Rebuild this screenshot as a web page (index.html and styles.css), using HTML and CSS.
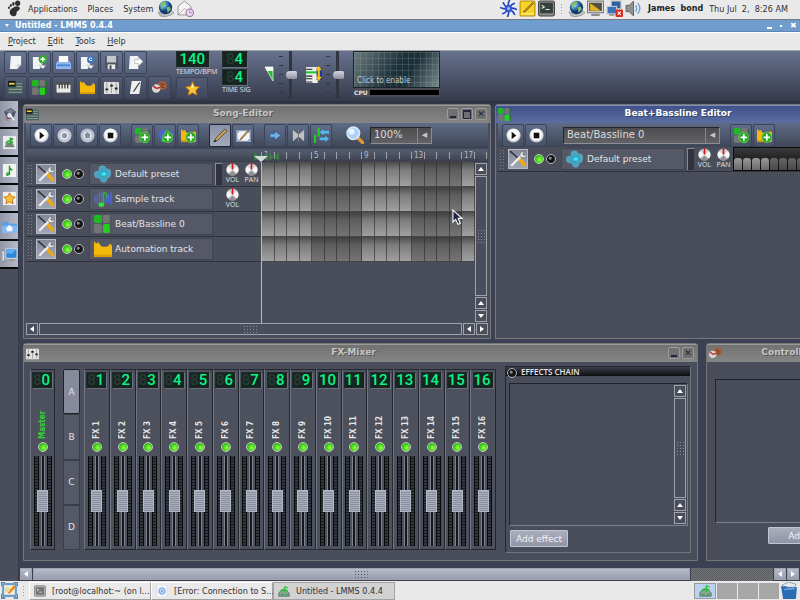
FILE: index.html
```
<!DOCTYPE html>
<html lang="en">
<head>
    <meta charset="UTF-8">
    <meta name="viewport" content="width=device-width, initial-scale=1.0">
    <title>Untitled - LMMS 0.4.4</title>
    <link rel="stylesheet" href="styles.css">
</head>
<body>

    <svg class="sprite" aria-hidden="true">
        <defs>
            <radialGradient id="g-blob"><stop offset="0" stop-color="#35d8f0"/><stop offset=".3" stop-color="#3aa3bd"/><stop offset="1" stop-color="#5aa5c4"/></radialGradient>
            <linearGradient id="g-disc" x2="0" y2="1"><stop offset="0" stop-color="#fff"/><stop offset="1" stop-color="#bfc3cc"/></linearGradient>
            <radialGradient id="g-globe" cx=".35" cy=".3"><stop offset="0" stop-color="#d5ebff"/><stop offset=".5" stop-color="#3f86cf"/><stop offset="1" stop-color="#153a70"/></radialGradient>
        </defs>
        <symbol id="foot" viewBox="0 0 16 16"><g fill="#303030"><path d="M7 7c3-2 6-1 6 1s-3 2-3 4-1 4-4 3-4-6 1-8z"/><ellipse cx="11" cy="3" rx="2.4" ry="2.6"/><ellipse cx="7" cy="3.6" rx="1.2" ry="1.8"/><ellipse cx="4.6" cy="5.2" rx="1" ry="1.4"/><ellipse cx="2.8" cy="7.2" rx=".9" ry="1.2"/></g></symbol>
        <symbol id="globe" viewBox="0 0 16 16"><path d="M1 11q6 5 13-1l2 2q-6 5-13 3z" fill="#c5c9c9" stroke="#666" stroke-width=".5"/><circle cx="8" cy="7" r="6.300" fill="url(#g-globe)"/><path d="M3 4q3-4 6-2l-2 3-2 1 1 3-2-1zM9 7l3-1 1 3-3 3z" fill="#7cc068"/></symbol>
        <symbol id="mail" viewBox="0 0 16 16"><path d="M1 6l6-5 6 5v8H1z" fill="#f5f5f2" stroke="#888" stroke-width=".8"/><path d="M1 14l6-6 6 6" fill="none" stroke="#999" stroke-width=".7"/><circle cx="12" cy="12" r="3.5" fill="#e9dcf0" stroke="#9a68a8"/><path d="M12 10v2h2" fill="none" stroke="#9a68a8" stroke-width=".7"/></symbol>
        <symbol id="burst" viewBox="0 0 16 16"><g stroke="#1d3fc0" stroke-width="1.5" fill="none"><path d="M8 8Q7 4 9 0M8 8Q10 4 14 3M8 8q4-1 8 1M8 8q4 2 6 6M8 8q1 4-1 8M8 8q-2 4-6 5M8 8q-4 1-8-1M8 8Q4 6 3 2"/></g><circle cx="8" cy="8" r="3.500" fill="#3557d0"/><circle cx="8" cy="8" r="1.500" fill="#9db5f5"/></symbol>
        <symbol id="note" viewBox="0 0 16 16"><rect x="1" y="1" width="14" height="14" rx="1" fill="#f5d425" stroke="#b88a12"/><path d="M2 13h12" stroke="#fff3a0"/><path d="M5 10l8-8 1 1-8 8-2 .5z" fill="#c98a2b" stroke="#5a421a" stroke-width=".5"/></symbol>
        <symbol id="term" viewBox="0 0 16 16"><rect x=".5" y="1" width="15" height="14" rx="1.5" fill="#8c8f88" stroke="#444"/><rect x="2" y="2.5" width="12" height="10" fill="#34403a"/><path d="M3.500 5l2.500 1.500L3.500 8M7 9h4" stroke="#e5e5e5" fill="none"/></symbol>
        <symbol id="term-task" viewBox="0 0 16 16"><rect x=".5" y="1" width="15" height="14" rx="1.5" fill="#b5b7b2" stroke="#777"/><rect x="2.500" y="3" width="11" height="10" fill="#6f7672"/><path d="M4 5l2.500 1.500L4 8M7 9.500h4" stroke="#e5e5e5" fill="none"/></symbol>
        <symbol id="monitor" viewBox="0 0 16 16"><rect x=".5" y="1" width="15" height="11" fill="#e4e2da" stroke="#777"/><rect x="2" y="2.500" width="12" height="8" fill="#555046"/><path d="M3 3l10 7H3z" fill="#e5b422"/><path d="M4 14h8" stroke="#888" stroke-width="2"/></symbol>
        <symbol id="net" viewBox="0 0 16 16"><rect x="5" y="1" width="9" height="7" fill="#2e5fa5" stroke="#bbb"/><rect x="1" y="6" width="9" height="7" fill="#3b72bd" stroke="#ccc"/><path d="M3 14h5" stroke="#888" stroke-width="1.500"/><rect x="9" y="9" width="7" height="7" rx="1" fill="#d92a20"/><path d="M11 11l3 3M14 11l-3 3" stroke="#fff"/></symbol>
        <symbol id="speaker" viewBox="0 0 16 16"><path d="M1 5h3l4-4v14l-4-4H1z" fill="#8f938f" stroke="#555" stroke-width=".8"/><path d="M10 5q2 3 0 6M12 3q4 5 0 10" stroke="#6b9ad2" fill="none" stroke-width="1.200"/></symbol>
        <symbol id="page" viewBox="0 0 16 16"><path d="M3 1h11v9l-4 5H2z" fill="#f2f3f4"/><path d="M14 10h-4v5z" fill="#c9cccf"/></symbol>
        <symbol id="page-add" viewBox="0 0 16 16"><path d="M1 2h10v9l-3 4H1z" fill="#f2f3f4"/><circle cx="11.500" cy="4.500" r="4.500" fill="#2fae28"/><path d="M11.500 2v5M9 4.500h5" stroke="#fff" stroke-width="1.500"/><path d="M8 11h7l-3.500 4z" fill="#fff" stroke="#6b7488" stroke-width=".5"/></symbol>
        <symbol id="tray" viewBox="0 0 16 16"><path d="M3 1h10v7H3z" fill="#fbfcff"/><path d="M0 9l2-3h1v2h10V6h1l2 3v6H0z" fill="#8bb9f0"/><path d="M1 11h14" stroke="#4d87d3" stroke-width="2"/></symbol>
        <symbol id="page-recent" viewBox="0 0 16 16"><path d="M1 2h10v9l-3 4H1z" fill="#f2f3f4"/><circle cx="11.500" cy="5" r="4" fill="#3d78bf"/><path d="M13 4q-2-2-3 0t3 2" stroke="#fff" fill="none"/><path d="M8 11h7l-3.500 4z" fill="#fff" stroke="#6b7488" stroke-width=".5"/></symbol>
        <symbol id="floppy" viewBox="0 0 16 16"><path d="M1 1h14v14H3l-2-2z" fill="#50535b"/><path d="M3 1h10v7H3z" fill="#c3c6cc"/><path d="M4 10h8v5H4z" fill="#e8e9ec"/><path d="M6 11h2v4H6z" fill="#444"/></symbol>
        <symbol id="page-out" viewBox="0 0 16 16"><path d="M2 1h9v14H1z" fill="#f2f3f4"/><path d="M7 5h4V2l5 5-5 5V9H7z" fill="#fff" stroke="#a9adb2" stroke-width=".7"/></symbol>
        <symbol id="song" viewBox="0 0 16 16"><rect x="0" y="2" width="16" height="13" rx="1" fill="#46605f"/><rect x="0" y="1" width="8" height="6" fill="#16181a"/><path d="M1 4h6" stroke="#ead13a" stroke-width="2"/><path d="M9 4h6M9 7h6M1 10h14M1 13h14" stroke="#8c9c93" stroke-width="1.200"/></symbol>
        <symbol id="bb" viewBox="0 0 16 16"><rect width="7" height="7" rx="1.500" fill="#22b822"/><rect x="8" width="6" height="7" rx="1.500" fill="#747674"/><rect y="8" width="7" height="8" rx="1.500" fill="#747674"/><rect x="8" y="8" width="6" height="8" rx="1.500" fill="#25cf1e"/><path d="M15.500 1v6M15.500 9v6" stroke="#2a6f31"/></symbol>
        <symbol id="keys" viewBox="0 0 16 16"><rect y="3" width="16" height="11" rx="1" fill="#e9e9e9" stroke="#333"/><path d="M0 4h16" stroke="#555" stroke-width="2"/><path d="M3.500 4v5M6.500 4v5M9.500 4v5M12.500 4v5" stroke="#222" stroke-width="1.200"/></symbol>
        <symbol id="auto" viewBox="0 0 16 16"><path d="M0 1l2 2 2-1 2 3 2 1h3l2-1 1-2 2 2v10H0z" fill="#f5b90c"/><path d="M0 14h16" stroke="#d99a08" stroke-width="2"/></symbol>
        <symbol id="mixer" viewBox="0 0 16 16"><rect y="2" width="16" height="13" rx="1" fill="#e0e2e2"/><path d="M3 3v11M8 3v11M13 3v11" stroke="#999"/><path d="M1.500 10h3M6.500 6h3M11.500 9h3" stroke="#222" stroke-width="2"/></symbol>
        <symbol id="notes" viewBox="0 0 16 16"><path d="M4 1h10l-2 14H2z" fill="#edf0ef"/><path d="M6 11l6-9 1 1-6 9-2 1z" fill="#444"/></symbol>
        <symbol id="ctrl" viewBox="0 0 16 16"><path d="M6 3q4-3 9-1l1 6q-4 4-8 1z" fill="#a55b34"/><path d="M9 4l4 1M8 7l5 1" stroke="#6a351d"/><circle cx="4.500" cy="9" r="4.500" fill="#d8d8d8"/><path d="M4.500 9L1 6M4.500 9l4-1" stroke="#c3261f" stroke-width="1.600"/></symbol>
        <symbol id="star" viewBox="0 0 16 16"><path d="M8 .8l2.200 4.900 5.200.6-3.900 3.600 1.100 5.300L8 12.500l-4.600 2.700 1.100-5.300L.6 6.300l5.200-.6z" fill="#fbc62c" stroke="#c07818" stroke-width=".8"/><path d="M8 3l1.200 4-3 1z" fill="#fff0a0"/></symbol>
        <symbol id="vol" viewBox="0 0 10 16"><path d="M1 1h8v14z" fill="#21c02b" stroke="#e8f5e8" stroke-width=".8"/><path d="M1 1h8v4H3z" fill="#f4fff4"/></symbol>
        <symbol id="pitch" viewBox="0 0 16 16"><rect y="1" width="11" height="15" fill="#eee"/><path d="M0 3h6M0 9.500h6M0 12h6M0 15h6" stroke="#222"/><path d="M0 6h11" stroke="#1fc62e" stroke-width="2"/><rect x="10" y="2" width="5" height="11" fill="#2030a8"/><path d="M12 0l3 4h-2v6h2l-3 4-3-4h2V4H9z" fill="#fcc510"/></symbol>
        <symbol id="play" viewBox="0 0 16 16"><circle cx="8" cy="8" r="7.500" fill="url(#g-disc)"/><circle cx="8" cy="8" r="5.500" fill="#fff"/><path d="M6 4l5 4-5 4z" fill="#111"/></symbol>
        <symbol id="rec" viewBox="0 0 16 16"><circle cx="8" cy="8" r="7.500" fill="#c0c5d1"/><circle cx="8" cy="8" r="4.500" fill="#e6eaf2"/><circle cx="8" cy="8" r="2.800" fill="#8b93a5"/></symbol>
        <symbol id="rec-play" viewBox="0 0 16 16"><circle cx="8" cy="8" r="7.500" fill="#b9bfcc"/><circle cx="8" cy="8" r="4.500" fill="#e2e6ee"/><path d="M5 7l3-3 3 3-1 4H6z" fill="#858da1"/></symbol>
        <symbol id="stop" viewBox="0 0 16 16"><circle cx="8" cy="8" r="7.500" fill="url(#g-disc)"/><circle cx="8" cy="8" r="5.500" fill="#fff"/><path d="M5 5h6v6H5z" fill="#111"/></symbol>
        <symbol id="plus" viewBox="0 0 16 16"><circle cx="10.500" cy="10" r="5.500" fill="#23a91e" stroke="#8ee08a" stroke-width=".6"/><path d="M10.500 6.500v7M7 10h7" stroke="#fff" stroke-width="1.800"/></symbol>
        <symbol id="wave" viewBox="0 0 16 16"><path d="M1 5v5M3 3v9M5 1v12M7 2v9M11 3v9M13 4v7M15 2v11" stroke="#5468dc" stroke-width="1.200"/><path d="M8.500 2v11M8.500 2q4 1 3 5" stroke="#2fae3a" stroke-width="1.400" fill="none"/><ellipse cx="6.500" cy="13" rx="2.500" ry="2" fill="#35e03c"/></symbol>
        <symbol id="pencil" viewBox="0 0 16 16"><path d="M1 15l2-4L13 1l2 2L5 13z" fill="#d4a35a" stroke="#3e3018" stroke-width=".8"/><path d="M1 15l1-2.500 1.500 1.500z" fill="#111"/></symbol>
        <symbol id="select" viewBox="0 0 16 16"><path d="M1 3h14v11H1z" fill="#f2f4f7" stroke="#9fb3cf"/><path d="M0 2h3v3H0zM13 2h3v3h-3zM0 12h3v3H0zM13 12h3v3h-3z" fill="#8aa4c8"/><path d="M5 11l8-9 1 1-8 9-2 1z" fill="#b98a45" stroke="#5b4524" stroke-width=".5"/></symbol>
        <symbol id="arrow" viewBox="0 0 16 16"><path d="M2 6h5V3l7 5-7 5v-3H2z" fill="#74aee4" stroke="#29588c" stroke-width=".8"/></symbol>
        <symbol id="bow" viewBox="0 0 16 16"><path d="M2 2l6 5 6-5v12L8 9l-6 5z" fill="#bfc1c5"/><path d="M8 1v14" stroke="#777"/></symbol>
        <symbol id="loop" viewBox="0 0 16 16"><path d="M1 7v9M5 0v9" stroke="#28cd22" stroke-width="2.400"/><path d="M6 4.500l4-3.500v2h6v3h-6v2zM16 11.500L12 8v2H6v3h6v2z" fill="#57b5ee"/></symbol>
        <symbol id="zoom" viewBox="0 0 16 16"><path d="M10 10l5 5" stroke="#e29a2b" stroke-width="3" stroke-linecap="round"/><circle cx="6.500" cy="6.500" r="5.500" fill="#a8d2fb" stroke="#d9e6f4" stroke-width="1.500"/><circle cx="5" cy="5" r="2.500" fill="#eaf5ff"/></symbol>
        <symbol id="tools" viewBox="0 0 16 16"><path d="M1 1l8 7" stroke="#333" stroke-width="1.400"/><path d="M9 8l5.500 6" stroke="#f0a818" stroke-width="3"/><path d="M2 14L11 5" stroke="#eee" stroke-width="2"/><path d="M10 6q-1-4 3-5l-1 3 1 1 3-1q-1 4-6 2z" fill="#f2f2f2" stroke="#555" stroke-width=".4"/></symbol>
        <symbol id="blob" viewBox="0 0 16 16"><path d="M5 1q5-2 6 2 5 0 4 5 0 3-3 4-1 5-5 3-2-1-2-3-5 0-5-4 0-3 4-3 0-3 1-4z" fill="url(#g-blob)"/><circle cx="9" cy="8" r="1.600" fill="#2cf0ff"/></symbol>
        <symbol id="knob" viewBox="0 0 14 14"><circle cx="7" cy="7" r="6.500" fill="#d3d3d3" stroke="#6f6f74" stroke-width=".6"/><path d="M7 7L2 3.500A6 6 0 0 0 2 11zM7 7l5-3.500A6 6 0 0 1 12 11z" fill="#f8f8f8"/><path d="M7 8l-4 4a6 6 0 0 0 8 0z" fill="#909094"/><path d="M7 0v7" stroke="#d51616" stroke-width="1.800"/></symbol>
        <symbol id="plug" viewBox="0 0 16 16"><path d="M2 5l7-4 6 4-3 7-6 1z" fill="#50556a"/><path d="M4 5l5-3 4 3-4 2z" fill="#7c829a"/><circle cx="8" cy="9" r="2.500" fill="#dfe3ef"/><path d="M3 10q1 4 4 5" stroke="#c9603a" fill="none"/><path d="M9 9l4 5" stroke="#e9ecf5" stroke-width="2"/></symbol>
        <symbol id="lmms" viewBox="0 0 16 16"><path d="M1 11l3-4h7l4 4v4H1z" fill="#8fa09a" stroke="#3e5850" stroke-width=".8"/><path d="M3 9q4-6 10-1M9 2v8M9 2l4 2" stroke="#2bc235" stroke-width="1.600" fill="none"/><path d="M4 13h3M10 13h3" stroke="#27b52d" stroke-width="2"/></symbol>
        <symbol id="lmms-file" viewBox="0 0 16 16"><rect x="1" y="1" width="14" height="14" fill="#e9edea"/><path d="M3 12l2-4h6l2 4v1H3z" fill="#74867f"/><path d="M4 9q3-5 8-1M9 3v7M9 3l3 2" stroke="#23a52c" stroke-width="1.500" fill="none"/></symbol>
        <symbol id="music" viewBox="0 0 16 16"><rect x="1" y="1" width="14" height="14" fill="#f0f4ef"/><path d="M8 3v8q-3-1-3 1t3 0V5l3 3" stroke="#229c2a" stroke-width="1.500" fill="none"/></symbol>
        <symbol id="star-file" viewBox="0 0 16 16"><rect x="1" y="1" width="14" height="14" fill="#efefea"/><path d="M8 2l2 4 4 .5-3 3 .8 4L8 11.500l-3.800 2 .8-4-3-3L6 6z" fill="#f8c33a" stroke="#cf6f18"/></symbol>
        <symbol id="home" viewBox="0 0 16 16"><path d="M0 3h6l2 2h8v10H0z" fill="#5e9de0"/><path d="M0 7h16v8H0z" fill="#82b9f0"/><path d="M8 6l4 4h-1v3H5v-3H4z" fill="#f7faff"/></symbol>
        <symbol id="computer" viewBox="0 0 16 16"><rect x="4" y="2" width="12" height="10" fill="#2e86d8" stroke="#d9dde4"/><path d="M5 3h10l-4 4H5z" fill="#63aef0"/><path d="M8 14h6" stroke="#999" stroke-width="2"/><rect x="0" y="4" width="3" height="11" fill="#d9dbe0" stroke="#666" stroke-width=".5"/></symbol>
        <symbol id="desk" viewBox="0 0 16 16"><rect x="1" y="1" width="14" height="13" rx="1" fill="#6f9ccb"/><rect x="3" y="3" width="10" height="9" fill="#f3efdf"/><path d="M0 4V0h4M12 0h4v4M0 11v4h4M12 15h4v-4" fill="none" stroke="#466b98" stroke-width="1.500"/><path d="M6 10l6-7 2 2-6 6z" fill="#ef8a1e"/><circle cx="6" cy="7" r="2.500" fill="#e5dc9f"/></symbol>
        <symbol id="chrome" viewBox="0 0 16 16"><rect x="1" y="0" width="14" height="16" rx="1" fill="#f7f9fc" stroke="#c3c7cc" stroke-width=".6"/><circle cx="8" cy="8" r="5" fill="#93b9ea"/><circle cx="8" cy="8" r="2.200" fill="#fff"/><circle cx="8" cy="8" r="1.400" fill="#5b8fd4"/></symbol>
        <symbol id="trash" viewBox="0 0 16 16"><path d="M1 3l6-3 7 2-1 3H2z" fill="#e5eaf0" stroke="#66788c" stroke-width=".6"/><path d="M0 4h5l1 1h9l-1 11H2z" fill="#2c6cb5"/><path d="M3 7l10-1" stroke="#72a5dc" stroke-width="1.500"/></symbol>
        <symbol id="cursor" viewBox="0 0 12 18"><path d="M1 1v13l3-3 2.500 5.500 2.500-1L6.700 10H11z" fill="#1d2542" stroke="#fff" stroke-width="1.200"/></symbol>
        <symbol id="marker" viewBox="0 0 26 10"><path d="M0 0l7 5-7 4zM14 0v9L7 5zM15 0l5 5-5 4zM25 0v9l-5-4z" fill="#3a7d49"/><path d="M0 4h14L7 10z" fill="#d3dcd6"/></symbol>
    </svg>

    <!-- GNOME panel -->
    <header class="panel">
        <svg class="icon foot"><use href="#foot"/></svg>
        <nav class="panel-menu">
            <a href="#">Applications</a>
            <a href="#">Places</a>
            <a href="#">System</a>
        </nav>
        <svg class="icon"><use href="#globe"/></svg>
        <svg class="icon"><use href="#mail"/></svg>
        <div class="tray">
            <svg class="icon"><use href="#burst"/></svg>
            <svg class="icon"><use href="#note"/></svg>
            <svg class="icon"><use href="#term"/></svg>
            <i class="dots"></i>
            <svg class="icon"><use href="#globe"/></svg>
            <svg class="icon"><use href="#monitor"/></svg>
            <svg class="icon"><use href="#net"/></svg>
            <svg class="icon"><use href="#speaker"/></svg>
        </div>
        <b class="user">James&nbsp; bond</b>
        <span class="clock">Thu Jul&nbsp; 2,&nbsp; 8:26 AM</span>
    </header>

    <!-- main window -->
    <div class="titlebar">
        <i class="caret"></i>
        <h1>Untitled - LMMS 0.4.4</h1>
        <button class="tb-min" aria-label="Minimize"></button>
        <button class="tb-max" aria-label="Maximize"></button>
        <button class="tb-close" aria-label="Close">✖</button>
    </div>
    <nav class="menubar">
        <a href="#"><u>P</u>roject</a>
        <a href="#"><u>E</u>dit</a>
        <a href="#"><u>T</u>ools</a>
        <a href="#"><u>H</u>elp</a>
    </nav>

    <div class="main-toolbar">
        <div class="tool-rows">
            <div class="tools">
                <button class="tool" aria-label="New"><svg><use href="#page"/></svg></button>
                <button class="tool" aria-label="New from template"><svg><use href="#page-add"/></svg></button>
                <button class="tool" aria-label="Open"><svg><use href="#tray"/></svg></button>
                <button class="tool" aria-label="Recent"><svg><use href="#page-recent"/></svg></button>
                <button class="tool" aria-label="Save"><svg><use href="#floppy"/></svg></button>
                <button class="tool" aria-label="Export"><svg><use href="#page-out"/></svg></button>
            </div>
            <div class="tools">
                <button class="tool" aria-label="Song editor"><svg><use href="#song"/></svg></button>
                <button class="tool" aria-label="Beat editor"><svg><use href="#bb"/></svg></button>
                <button class="tool" aria-label="Piano roll"><svg><use href="#keys"/></svg></button>
                <button class="tool" aria-label="Automation editor"><svg><use href="#auto"/></svg></button>
                <button class="tool" aria-label="FX mixer"><svg><use href="#mixer"/></svg></button>
                <button class="tool" aria-label="Notes"><svg><use href="#notes"/></svg></button>
                <button class="tool" aria-label="Controller rack"><svg><use href="#ctrl"/></svg></button>
            </div>
        </div>
        <div class="tempo">
            <div class="lcd lcd-wide">140</div>
            <span class="caption">TEMPO/BPM</span>
            <button class="tool star" aria-label="High quality"><svg><use href="#star"/></svg></button>
        </div>
        <div class="timesig">
            <div class="lcd pad">4</div>
            <div class="lcd pad">4</div>
            <span class="caption">TIME SIG</span>
        </div>
        <div class="master">
            <svg class="vol-icon"><use href="#vol"/></svg>
            <i class="ticks"></i>
            <input class="vslider" type="range" aria-label="Master volume">
            <svg class="icon pitch-icon"><use href="#pitch"/></svg>
            <i class="ticks"></i>
            <input class="vslider" type="range" aria-label="Master pitch">
        </div>
        <div class="scope">
            <button class="scope-view">Click to enable</button>
            <div class="cpu"><span>CPU</span><i></i></div>
        </div>
    </div>

    <main class="main">
        <aside class="sidebar">
            <button aria-label="Plugins"><svg class="icon"><use href="#plug"/></svg></button>
            <button aria-label="Projects"><svg class="icon"><use href="#lmms-file"/></svg></button>
            <button aria-label="Samples"><svg class="icon"><use href="#music"/></svg></button>
            <button aria-label="Presets"><svg class="icon"><use href="#star-file"/></svg></button>
            <button aria-label="Home"><svg class="icon"><use href="#home"/></svg></button>
            <button aria-label="Computer"><svg class="icon"><use href="#computer"/></svg></button>
        </aside>

        <div class="desktop">
            <div class="workspace">

                <!-- Song editor -->
                <section class="window song">
                    <div class="win-title">
                        <svg><use href="#song"/></svg>
                        <h2>Song-Editor</h2>
                        <button class="min" aria-label="Minimize"></button>
                        <button class="max" aria-label="Maximize"></button>
                        <button aria-label="Close">✕</button>
                    </div>
                    <div class="win-toolbar">
                        <div class="tools">
                            <button class="tool" aria-label="Play"><svg><use href="#play"/></svg></button>
                            <button class="tool" aria-label="Record"><svg><use href="#rec"/></svg></button>
                            <button class="tool" aria-label="Record while playing"><svg><use href="#rec-play"/></svg></button>
                            <button class="tool" aria-label="Stop"><svg><use href="#stop"/></svg></button>
                        </div>
                        <div class="tools">
                            <button class="tool" aria-label="Add beat"><svg><use href="#bb"/><use href="#plus"/></svg></button>
                            <button class="tool" aria-label="Add sample track"><svg><use href="#wave"/><use href="#plus"/></svg></button>
                            <button class="tool" aria-label="Add automation track"><svg><use href="#auto"/><use href="#plus"/></svg></button>
                        </div>
                        <div class="tools">
                            <button class="tool on" aria-label="Draw"><svg><use href="#pencil"/></svg></button>
                            <button class="tool" aria-label="Edit"><svg><use href="#select"/></svg></button>
                        </div>
                        <div class="tools">
                            <button class="tool" aria-label="Scroll"><svg><use href="#arrow"/></svg></button>
                            <button class="tool" aria-label="Loop points"><svg><use href="#bow"/></svg></button>
                            <button class="tool" aria-label="Return"><svg><use href="#loop"/></svg></button>
                        </div>
                        <svg class="icon zoom-icon"><use href="#zoom"/></svg>
                        <div class="combo zoom-combo">
                            <select aria-label="Zoom"><option>100%</option></select>
                        </div>
                    </div>
                    <div class="timeline">
                        <div class="ruler">
                            <span>1</span><span>5</span><span>9</span><span>13</span><span>17</span>
                            <svg class="marker"><use href="#marker"/></svg>
                        </div>
                    </div>
                    <div class="song-body">
                        <div class="tracks">
                            <div class="track">
                                <i class="grip"></i>
                                <button class="tool-btn" aria-label="Track actions"><svg><use href="#tools"/></svg></button>
                                <input class="led" type="checkbox" aria-label="Default preset on" checked>
                                <input class="led" type="checkbox" aria-label="Default preset solo">
                                <button class="track-name"><svg><use href="#blob"/></svg>Default preset</button>
                                <i class="activity"></i>
                                <div class="knob"><svg><use href="#knob"/></svg>VOL</div>
                                <div class="knob"><svg><use href="#knob"/></svg>PAN</div>
                            </div>
                            <div class="track">
                                <i class="grip"></i>
                                <button class="tool-btn" aria-label="Track actions"><svg><use href="#tools"/></svg></button>
                                <input class="led" type="checkbox" aria-label="Sample track on" checked>
                                <input class="led" type="checkbox" aria-label="Sample track solo">
                                <button class="track-name"><svg><use href="#wave"/></svg>Sample track</button>
                                <i class="activity none"></i>
                                <div class="knob"><svg><use href="#knob"/></svg>VOL</div>
                            </div>
                            <div class="track">
                                <i class="grip"></i>
                                <button class="tool-btn" aria-label="Track actions"><svg><use href="#tools"/></svg></button>
                                <input class="led" type="checkbox" aria-label="Beat/Bassline 0 on" checked>
                                <input class="led" type="checkbox" aria-label="Beat/Bassline 0 solo">
                                <button class="track-name"><svg><use href="#bb"/></svg>Beat/Bassline 0</button>
                            </div>
                            <div class="track">
                                <i class="grip"></i>
                                <button class="tool-btn" aria-label="Track actions"><svg><use href="#tools"/></svg></button>
                                <input class="led" type="checkbox" aria-label="Automation track on" checked>
                                <input class="led" type="checkbox" aria-label="Automation track solo">
                                <button class="track-name"><svg><use href="#auto"/></svg>Automation track</button>
                            </div>
                        </div>
                        <div class="pattern-area">
                            <div class="pattern"></div>
                            <div class="pattern"></div>
                            <div class="pattern"></div>
                            <div class="pattern"></div>
                        </div>
                        <div class="scroll-v">
                            <button aria-label="Up"><i class="up"></i></button>
                            <div class="thumb"><i></i></div>
                            <button aria-label="Up"><i class="up"></i></button>
                            <button aria-label="Down"><i class="down"></i></button>
                        </div>
                    </div>
                    <div class="scroll-h">
                        <button aria-label="Left"><i class="left"></i></button>
                        <div class="thumb"><i></i></div>
                        <button aria-label="Left"><i class="left"></i></button>
                        <button aria-label="Right"><i class="right"></i></button>
                    </div>
                </section>

                <!-- Beat+Bassline editor -->
                <section class="window beat active">
                    <div class="win-title">
                        <svg><use href="#bb"/></svg>
                        <h2>Beat+Bassline Editor</h2>
                        <button class="min" aria-label="Minimize"></button>
                        <button class="max" aria-label="Maximize"></button>
                        <button aria-label="Close">✕</button>
                    </div>
                    <div class="win-toolbar">
                        <div class="tools">
                            <button class="tool" aria-label="Play"><svg><use href="#play"/></svg></button>
                            <button class="tool" aria-label="Stop"><svg><use href="#stop"/></svg></button>
                        </div>
                        <div class="combo beat-combo">
                            <select aria-label="Beat"><option>Beat/Bassline 0</option></select>
                        </div>
                        <div class="tools">
                            <button class="tool" aria-label="Add beat"><svg><use href="#bb"/><use href="#plus"/></svg></button>
                            <button class="tool" aria-label="Add automation track"><svg><use href="#auto"/><use href="#plus"/></svg></button>
                        </div>
                    </div>
                    <div class="track">
                        <i class="grip"></i>
                        <button class="tool-btn" aria-label="Track actions"><svg><use href="#tools"/></svg></button>
                        <input class="led" type="checkbox" aria-label="Default preset on" checked>
                        <input class="led" type="checkbox" aria-label="Default preset solo">
                        <button class="track-name"><svg><use href="#blob"/></svg>Default preset</button>
                        <i class="activity"></i>
                        <div class="knob"><svg><use href="#knob"/></svg>VOL</div>
                        <div class="knob"><svg><use href="#knob"/></svg>PAN</div>
                        <div class="steps" id="steps"></div>
                    </div>
                </section>

                <!-- FX mixer -->
                <section class="window fx">
                    <div class="win-title">
                        <svg><use href="#mixer"/></svg>
                        <h2>FX-Mixer</h2>
                        <button class="min" aria-label="Minimize"></button>
                        <button aria-label="Close">✕</button>
                    </div>
                    <div class="fx-body">
                        <div class="strips" id="master"></div>
                        <div class="banks">
                            <button class="on">A</button>
                            <button>B</button>
                            <button>C</button>
                            <button>D</button>
                        </div>
                        <div class="strips channels" id="channels"></div>
                        <div class="chain">
                            <label class="chain-head"><input class="led" type="checkbox">EFFECTS CHAIN</label>
                            <div class="chain-list">
                                <div class="scroll-v">
                                    <button aria-label="Up"><i class="up"></i></button>
                                    <div class="thumb"><i></i></div>
                                    <button aria-label="Up"><i class="up"></i></button>
                                    <button aria-label="Down"><i class="down"></i></button>
                                </div>
                            </div>
                            <button class="add">Add effect</button>
                        </div>
                    </div>
                </section>

                <!-- Controller rack -->
                <section class="window rack">
                    <div class="win-title">
                        <svg><use href="#ctrl"/></svg>
                        <h2>Controller Rack</h2>
                        <button class="min" aria-label="Minimize"></button>
                        <button aria-label="Close">✕</button>
                    </div>
                    <div class="rack-list"></div>
                    <button class="add">Add</button>
                </section>

                <svg class="cursor"><use href="#cursor"/></svg>
            </div>

            <div class="scroll-h outer">
                <button aria-label="Left"><i class="left"></i></button>
                <div class="thumb"><i></i></div>
                <div class="gutter"></div>
                <button aria-label="Left"><i class="left"></i></button>
                <button aria-label="Right"><i class="right"></i></button>
            </div>
        </div>
    </main>

    <footer class="taskbar">
        <svg class="icon"><use href="#desk"/></svg>
        <i class="dots"></i>
        <button class="task"><svg><use href="#term-task"/></svg>[root@localhot:~ (on l...</button>
        <button class="task"><svg><use href="#chrome"/></svg>[Error: Connection to S...</button>
        <button class="task current"><svg><use href="#lmms"/></svg>Untitled - LMMS 0.4.4</button>
        <div class="pager">
            <i class="here"><svg><use href="#lmms"/></svg></i><i></i><i></i><i></i>
        </div>
        <svg class="icon"><use href="#trash"/></svg>
    </footer>

    <script src="script.js"></script>
</body>
</html>
```
FILE: styles.css
```
* {
    box-sizing: border-box;
}
body {
    margin: 0;
    height: 100vh;
    display: flex;
    flex-direction: column;
    overflow: hidden;
    font-family: 'DejaVu Sans', sans-serif;
    font-size: 9px;
    line-height: 12px;
    color: #e4e4e6;
    background: #3a3f4f;
}
button, input, select {
    font: inherit;
    color: inherit;
    margin: 0;
    padding: 0;
    border: 0;
    background: none;
}
a {
    color: inherit;
    text-decoration: none;
}
h1, h2 {
    margin: 0;
    font-size: 9px;
}
svg {
    display: block;
    flex: none;
}
.sprite {
    position: absolute;
    width: 0;
    height: 0;
}
.icon {
    width: 17px;
    height: 17px;
}

/* GNOME panel */
.panel {
    flex: none;
    height: 20px;
    display: flex;
    align-items: center;
    gap: 3px;
    padding: 0 12px 2px 6px;
    background: #e9e9e9;
    border-bottom: 1px solid #76797d;
    color: #303030;
    font-family: 'DejaVu Sans Condensed', 'DejaVu Sans', sans-serif;
}
.panel-menu {
    display: flex;
    gap: 10px;
    margin: 0 1px 0 2px;
}
.tray {
    display: flex;
    align-items: center;
    gap: 2px;
    margin-left: auto;
}
.dots {
    width: 3px;
    height: 12px;
    margin: 0 3px;
    background: radial-gradient(#999 1px, transparent 1px) 0 0 / 3px 3px;
}
.user {
    margin: 0 3px 0 3px;
    font-family: 'DejaVu Sans', sans-serif;
    font-size: 8px;
    color: #222;
}

/* main window frame */
.titlebar {
    flex: none;
    height: 12px;
    display: flex;
    align-items: center;
    padding: 0 5px;
    background: #709dce;
    border-bottom: 1px solid #5b86b8;
    color: #fff;
}
.titlebar h1 {
    flex: 1;
    margin-left: 6px;
    font-size: 8px;
}
.caret {
    border: 2px solid transparent;
    border-top: 3px solid #fff;
    border-bottom: 0;
}
.titlebar button {
    width: 5px;
    margin-left: 8px;
    font-size: 8px;
    line-height: 10px;
}
.tb-min {
    height: 2px;
    margin-top: 4px;
    background: #fff;
}
.titlebar .tb-max {
    width: 2px;
    height: 2px;
    background: #fff;
}
.menubar {
    flex: none;
    height: 19px;
    display: flex;
    align-items: center;
    gap: 12px;
    padding: 0 8px 2px;
    background: #e9e9e9;
    border-top: 1px solid #fff;
    border-bottom: 1px solid #a5a7ab;
    color: #303030;
    font-family: 'DejaVu Sans Condensed', 'DejaVu Sans', sans-serif;
}

/* toolbars */
.main-toolbar {
    flex: none;
    height: 50px;
    display: flex;
    padding: 0 4px;
    background: linear-gradient(#67728f, #353a4a);
}
.tool-rows {
    width: 172px;
    display: flex;
    flex-direction: column;
    gap: 2px;
}
.tools {
    display: flex;
    gap: 1px;
}
.tool {
    width: 22px;
    height: 23px;
    display: flex;
    align-items: center;
    justify-content: center;
    border: 1px solid #39435a;
    border-radius: 2px;
    background: rgba(130, 150, 190, 0.12);
}
.main-toolbar .tools .tool {
    width: 23px;
}
.tool svg {
    width: 15px;
    height: 15px;
}
.tool.on {
    background: linear-gradient(#8891a8, #a4abbe);
    border-color: #222734;
}
.tempo {
    width: 46px;
}
.timesig {
    width: 41px;
}
.tempo .star {
    width: 32px;
    height: 22px;
    margin-top: 1px;
}
.lcd {
    width: 26px;
    height: 17px;
    display: flex;
    align-items: center;
    justify-content: flex-end;
    padding-right: 4px;
    border: 1px solid #222b2b;
    border-right-color: #687080;
    border-bottom-color: #687080;
    background: #16251f;
    color: #08f58a;
    font-family: Roboto, sans-serif;
    font-size: 15px;
    font-weight: 500;
    line-height: 15px;
}
.lcd-wide {
    width: 34px;
}
.pad::before {
    content: "8";
    color: #283a33;
}
.timesig .lcd + .lcd {
    margin-top: 1px;
}
.caption {
    display: block;
    font-family: 'Open Sans', sans-serif;
    font-size: 7px;
    line-height: 8px;
    white-space: nowrap;
}
.master {
    display: flex;
    width: 90px;
}
.vol-icon {
    width: 10px;
    height: 16px;
    margin: 15px 5px 0 1px;
}
.pitch-icon {
    margin: 15px 3px 0 9px;
}
.ticks {
    width: 4px;
    height: 40px;
    margin-top: 5px;
    background: repeating-linear-gradient(#2f3545 0 1px, transparent 1px 9px);
}
.vslider {
    appearance: none;
    width: 12px;
    height: 47px;
    margin-left: 2px;
    writing-mode: vertical-lr;
    direction: rtl;
    background: linear-gradient(90deg, transparent 4px, #30353f 4px 7px, transparent 7px);
}
.vslider::-webkit-slider-thumb {
    appearance: none;
    width: 11px;
    height: 8px;
    border-radius: 5px 2px 2px 5px;
    background: linear-gradient(#d5d8e0, #8b90a0);
}
.scope {
    width: 87px;
}
.scope-view {
    width: 100%;
    height: 37px;
    display: flex;
    align-items: flex-end;
    padding: 0 3px;
    border: 1px solid #1c2429;
    background:
        repeating-linear-gradient(90deg, rgba(150, 175, 180, 0.2) 0 1px, transparent 1px 6px),
        repeating-linear-gradient(rgba(150, 175, 180, 0.2) 0 1px, transparent 1px 6px),
        linear-gradient(120deg, #6b7a7d, #1d3038 50%, #1d3038 65%, #7a8a8b);
    font-size: 8px;
    color: #c5cdd0;
    font-family: 'DejaVu Sans Condensed', 'DejaVu Sans', sans-serif;
}
.cpu {
    height: 9px;
    display: flex;
    align-items: center;
    gap: 2px;
    padding: 1px;
    background: #484b53;
    font-size: 6px;
    font-weight: bold;
}
.cpu i {
    flex: 1;
    height: 5px;
    background: #000;
}

/* main area */
.main {
    flex: 1;
    min-height: 0;
    display: flex;
}
.sidebar {
    width: 19px;
    background: #4a4e5b;
    border-right: 1px solid #353948;
}
.sidebar button {
    width: 18px;
    height: 28px;
    display: flex;
    align-items: center;
    justify-content: center;
    border-bottom: 2px solid #08090c;
    background: linear-gradient(90deg, #9297a8, #b6bac8);
}
.sidebar .icon {
    width: 15px;
    height: 15px;
}
.desktop {
    flex: 1;
    min-width: 0;
    display: flex;
    flex-direction: column;
}
.workspace {
    flex: 1;
    position: relative;
    overflow: hidden;
    background: linear-gradient(#2d3240, #3b4052 8px, #3b4052);
}

/* windows */
.window {
    position: absolute;
    display: flex;
    flex-direction: column;
    border: 1px solid #777;
    border-radius: 3px 3px 0 0;
    background: #4a4e5a;
}
.song {
    left: 4px;
    top: 3px;
    width: 468px;
    height: 235px;
}
.beat {
    left: 476px;
    top: 3px;
    width: 394px;
    height: 235px;
}
.fx {
    left: 4px;
    top: 242px;
    width: 675px;
    height: 218px;
}
.rack {
    left: 687px;
    top: 242px;
    width: 203px;
    height: 218px;
}
.win-title {
    flex: none;
    height: 18px;
    display: flex;
    align-items: center;
    gap: 2px;
    padding: 0 3px 1px 2px;
    border-top: 1px solid #9a9a9a;
    background: linear-gradient(#717171, #868686);
    color: #c6c6c6;
}
.active .win-title {
    border-color: #7f8fbd;
    background: linear-gradient(#3f5188, #5b6ea2);
    color: #fff;
}
.win-title svg {
    width: 13px;
    height: 13px;
}
.win-title h2 {
    flex: 1;
    padding-bottom: 2px;
    text-align: center;
    text-shadow: 1px 1px 0 rgba(0, 0, 0, 0.35);
    white-space: nowrap;
}
.win-title button {
    width: 12px;
    height: 12px;
    border: 1px solid #9c9c9c;
    border-radius: 2px;
    background: #707070;
    color: #20263a;
    font-size: 9px;
    font-weight: bold;
    line-height: 10px;
}
.win-title .min::after, .win-title .max::after {
    content: "";
    display: block;
    width: 6px;
    height: 6px;
    margin: auto;
    border-bottom: 2px solid #20263a;
}
.win-title .max::after {
    border: 1px solid #20263a;
    border-top-width: 2px;
}
.win-toolbar {
    flex: none;
    height: 24px;
    display: flex;
    align-items: center;
    gap: 10px;
    margin: 0 2px;
    padding-left: 4px;
    background: linear-gradient(#5f6b86, #3e4656);
}
.zoom-icon {
    width: 18px;
    height: 18px;
    margin: 0 -4px 0 4px;
}
.combo {
    position: relative;
    height: 17px;
    border: 1px solid #22252d;
    border-right-color: #8a8e98;
    border-bottom-color: #8a8e98;
    background: linear-gradient(#4d4d4f, #626264);
}
.combo select {
    appearance: none;
    display: block;
    width: 100%;
    height: 15px;
    padding-left: 3px;
    font-size: 10px;
    color: #dcdcdc;
}
.combo::after {
    content: "◀";
    position: absolute;
    top: 0;
    right: 0;
    width: 13px;
    height: 15px;
    border-left: 1px solid #85878c;
    font-size: 7px;
    line-height: 15px;
    text-align: center;
    color: #c8c8c8;
    pointer-events: none;
}
.zoom-combo {
    width: 62px;
}
.beat-combo {
    width: 157px;
    margin-left: 6px;
}

/* song editor */
.timeline {
    flex: none;
    height: 15px;
    margin: 0 2px;
    padding-left: 235px;
    background: linear-gradient(#353a48, #545c70 3px, #3c404d);
}
.ruler {
    position: relative;
    height: 15px;
    display: flex;
    overflow: visible;
    background:
        linear-gradient(90deg, #9fa2ab 1px, transparent 1px 13px, #9fa2ab 13px 14px, transparent 14px) 0 5px / 25px 7px repeat-x;
}
.ruler span {
    width: 50px;
    padding-left: 3px;
    font-family: 'DejaVu Sans Condensed', 'DejaVu Sans', sans-serif;
    font-size: 8px;
    line-height: 17px;
    color: #b5b8bf;
}
.ruler span:last-of-type {
    width: 20px;
}
.marker {
    position: absolute;
    left: -7px;
    top: 5px;
    width: 26px;
    height: 10px;
}
.song-body {
    flex: 1;
    min-height: 0;
    display: flex;
    margin: 0 2px;
}
.tracks {
    width: 235px;
}
.track {
    height: 25px;
    display: flex;
    align-items: center;
    padding-bottom: 1px;
    border-bottom: 1px solid #2f323b;
}
.grip {
    width: 6px;
    height: 20px;
    margin: 0 3px 0 1px;
    background: radial-gradient(#7d818d 1px, transparent 1px) 0 0 / 3px 3px;
}
.tool-btn {
    width: 20px;
    height: 20px;
    display: flex;
    align-items: center;
    justify-content: center;
    margin-right: 5px;
    border: 1px solid #b5bac9;
    background: linear-gradient(#848a9c, #a1a6b5);
}
.tool-btn svg {
    width: 18px;
    height: 18px;
}
.led {
    appearance: none;
    flex: none;
    width: 10px;
    height: 10px;
    margin: 0 1px;
    border-radius: 50%;
    border: 1px solid #b0b3b8;
    background: radial-gradient(circle at 40% 40%, #8a8a8a 1px, #111 2px, #222);
}
.led:checked {
    border-color: #c3cdbf;
    background: radial-gradient(circle at 60% 60%, #a6ff5a, #43d81c 3px, #2e8d1d);
}
.track-name {
    width: 124px;
    height: 22px;
    display: flex;
    align-items: center;
    gap: 3px;
    margin-left: 4px;
    padding-left: 4px;
    border: 1px solid #40444f;
    background: #555967;
    white-space: nowrap;
}
.track-name svg {
    width: 18px;
    height: 18px;
}
.activity {
    width: 7px;
    height: 22px;
    margin: 0 1px 0 2px;
    border-left: 1px solid #878b98;
    border-top: 1px solid #878b98;
    background: #30333f;
}
.activity.none {
    visibility: hidden;
}
.knob {
    width: 19px;
    display: flex;
    flex-direction: column;
    align-items: center;
    font-family: 'Open Sans', sans-serif;
    font-size: 7px;
    line-height: 8px;
}
.knob svg {
    width: 13px;
    height: 13px;
}
.pattern-area {
    flex: 1;
    border-left: 1px solid #b9bbbf;
}
.pattern {
    height: 25px;
    border-bottom: 1px solid #44464a;
    background:
        repeating-linear-gradient(90deg, transparent 0 12px, rgba(40, 40, 40, 0.6) 12px 13px, transparent 13px 24px, rgba(40, 40, 40, 0.6) 24px 25px),
        repeating-linear-gradient(90deg, transparent 0 50px, rgba(40, 40, 40, 0.36) 50px 100px),
        linear-gradient(#4d4d4d, #7c7c7c 8px, #a0a0a0);
}

/* scroll bars */
.scroll-v, .scroll-h {
    flex: none;
    display: flex;
    gap: 1px;
}
.scroll-v {
    flex-direction: column;
    width: 13px;
    padding: 1px 0;
}
.scroll-h {
    height: 13px;
    margin: 0 2px 2px;
}
.scroll-v button, .scroll-h button {
    width: 12px;
    height: 12px;
    display: flex;
    align-items: center;
    justify-content: center;
    border: 1px solid #9fa3ae;
}
.up, .down, .left, .right {
    border: 3px solid transparent;
}
.up {
    border-bottom: 4px solid #fff;
    border-top: 0;
}
.down {
    border-top: 4px solid #fff;
    border-bottom: 0;
}
.left {
    border-right: 4px solid #fff;
    border-left: 0;
}
.right {
    border-left: 4px solid #fff;
    border-right: 0;
}
.thumb {
    flex: 1;
    display: flex;
    align-items: center;
    justify-content: center;
    border: 1px solid #9fa3ae;
}
.scroll-v .thumb {
    width: 12px;
}
.scroll-h .thumb {
    height: 12px;
}
.thumb i {
    width: 15px;
    height: 9px;
    background: radial-gradient(#8b8f9b 1px, transparent 1px) 0 0 / 3px 3px;
}
.scroll-v .thumb i {
    width: 9px;
    height: 15px;
}
.outer {
    margin: 0;
    padding: 0 1px;
    background: #3c4050;
}
.outer .thumb, .outer button {
    background: linear-gradient(#b7bbca, #989daf);
}
.outer .thumb {
    flex: 8;
}
.outer .thumb i {
    background-image: radial-gradient(#555967 1px, transparent 1px);
}
.outer .gutter {
    flex: 1;
    background: repeating-conic-gradient(#5c5e62 0 25%, #707276 0 50%) 0 0 / 2px 2px;
}

/* beat editor */
.beat .track {
    flex: none;
    margin: 0 2px;
}
.steps {
    flex: 1;
    height: 24px;
    display: flex;
    gap: 1px;
    align-items: flex-end;
    overflow: hidden;
    border: 1px solid #0c0c0e;
    background: linear-gradient(#3a3b3d, #08080a);
}
.step {
    flex: none;
    width: 8px;
    height: 12px;
    border-radius: 3px 3px 0 0;
    background: linear-gradient(#9a9a9a, #6a6a6a);
}
.step.dim {
    background: linear-gradient(#666, #484848);
}

/* fx mixer */
.fx-body {
    flex: 1;
    min-height: 0;
    display: flex;
    padding: 4px 6px 7px;
}
.strips {
    display: flex;
    width: 25px;
    padding-top: 3px;
    padding-bottom: 3px;
}
.strips.channels {
    width: 412px;
    margin-left: 4px;
}
.strip {
    flex: 1;
    display: flex;
    flex-direction: column;
    align-items: center;
    padding: 2px 0 3px;
    border: 1px solid #23262e;
    border-left-color: #707583;
    background: #4d515e;
}
.strip .lcd {
    width: 21px;
    height: 17px;
    padding-right: 2px;
}
.strip-name {
    height: 50px;
    writing-mode: vertical-rl;
    transform: rotate(180deg);
    font-size: 8px;
    font-weight: bold;
    line-height: 12px;
    font-family: 'DejaVu Sans Condensed', 'DejaVu Sans', sans-serif;
}
#master .strip-name {
    color: #2fd82f;
}
.strip .led {
    margin: 3px 0 4px;
}
.fader {
    flex: 1;
    min-height: 0;
    display: flex;
    justify-content: center;
}
.fader input {
    appearance: none;
    width: 18px;
    height: 100%;
    writing-mode: vertical-lr;
    direction: rtl;
    background:
        linear-gradient(90deg, #08090b 1px, transparent 1px 4px, #08090b 4px 5px, transparent 5px 7px, #7e828e 7px 8px, #15171d 8px 10px, #7e828e 10px 11px, transparent 11px 13px, #08090b 13px 14px, transparent 14px 17px, #08090b 17px),
        linear-gradient(90deg, transparent 5px, #4d515e 5px 13px, transparent 13px),
        repeating-linear-gradient(#33373f 0 2px, #17191d 2px 3px);
}
.fader input::-webkit-slider-thumb {
    appearance: none;
    width: 11px;
    height: 22px;
    border: 1px solid #b3b7c4;
    background: repeating-linear-gradient(#a9aebc 0 1px, #8b90a0 1px 2px);
}
.banks {
    width: 17px;
    display: flex;
    flex-direction: column;
    margin: 3px 0 3px 8px;
}
.banks button {
    flex: 1;
    border: 1px solid #3a3e49;
    background: #555967;
}
.banks .on {
    border-color: #20232b;
    border-radius: 2px;
    background: #868a9b;
}
.chain {
    flex: 1;
    display: flex;
    flex-direction: column;
    align-items: flex-start;
    margin-left: 9px;
    border: 1px solid #23262e;
    border-right-color: #70747f;
    border-bottom-color: #70747f;
}
.chain-head {
    align-self: stretch;
    height: 9px;
    display: flex;
    align-items: center;
    gap: 3px;
    background: linear-gradient(#3c404c, #0c0d10);
    font-family: 'Open Sans', sans-serif;
    font-size: 8px;
    font-weight: 600;
    line-height: 8px;
}
.chain-head .led {
    margin-top: 3px;
}
.chain-list {
    flex: 1;
    align-self: stretch;
    display: flex;
    justify-content: flex-end;
    margin: 7px 2px 4px 3px;
    border: 1px solid #20232b;
    border-right-color: #7b7f89;
    border-bottom-color: #7b7f89;
}
.add {
    width: 58px;
    height: 17px;
    margin: 0 0 5px 4px;
    border: 1px solid #c3c6d2;
    border-radius: 1px;
    background: linear-gradient(#a9adbc, #9095a6);
    color: #f4f4f6;
}
.rack-list {
    flex: 1;
    margin: 17px 8px 4px;
    border: 1px solid #20232b;
    border-bottom-color: #7b7f89;
}
.rack .add {
    margin: 0 0 16px 61px;
}

.cursor {
    position: absolute;
    left: 433px;
    top: 108px;
    width: 11px;
    height: 17px;
}

/* bottom panel */
.taskbar {
    flex: none;
    height: 19px;
    display: flex;
    align-items: center;
    padding: 0 2px 0 1px;
    background: #e9e9e9;
    color: #303030;
    font-family: 'DejaVu Sans Condensed', 'DejaVu Sans', sans-serif;
}
.task {
    width: 122px;
    height: 18px;
    display: flex;
    align-items: center;
    gap: 6px;
    padding-left: 4px;
    border: 1px solid #fff;
    border-right-color: #a2a2a2;
    border-bottom-color: #a2a2a2;
    white-space: nowrap;
}
.task svg {
    width: 12px;
    height: 12px;
}
.task.current {
    background: #d2d2d2;
    border-color: #a2a2a2;
}
.taskbar .dots {
    margin: 0 4px;
}
.pager {
    display: flex;
    gap: 1px;
    margin: 0 2px 0 auto;
}
.pager i {
    width: 20px;
    height: 16px;
    background: #a6a6a6;
}
.pager .here {
    width: 22px;
    display: flex;
    justify-content: center;
    align-items: center;
    border: 1px solid #999;
    background: #b8d2f0;
}
.pager svg {
    width: 13px;
    height: 13px;
}
```
FILE: script.js
```
const master = document.getElementById("master");
const channels = document.getElementById("channels");
const steps = document.getElementById("steps");

function addStrip(parent, number, name) {
    const strip = document.createElement("div");
    strip.className = "strip";
    strip.innerHTML = `
        <div class="lcd ${number < 10 ? "pad" : ""}">${number}</div>
        <span class="strip-name">${name}</span>
        <input class="led" type="checkbox" aria-label="${name} on" checked>
        <div class="fader"><input type="range" aria-label="${name} level"></div>`;
    parent.appendChild(strip);
}

addStrip(master, 0, "Master");
for (let i = 1; i <= 16; i++) {
    addStrip(channels, i, "FX " + i);
}

for (let i = 0; i < 16; i++) {
    const step = document.createElement("i");
    step.className = i % 8 < 4 ? "step" : "step dim";
    steps.appendChild(step);
}
```
